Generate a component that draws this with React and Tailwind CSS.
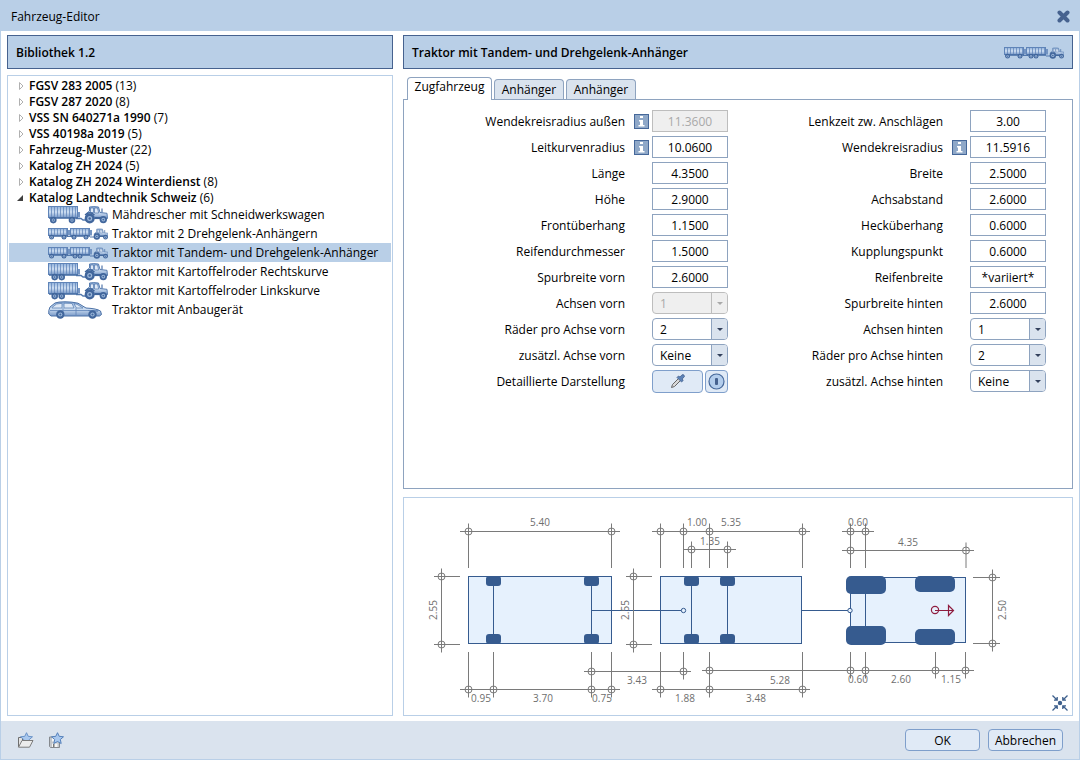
import { useId, useState } from 'react';

const groups = [
  { name: 'FGSV 283 2005', count: 13 },
  { name: 'FGSV 287 2020', count: 8 },
  { name: 'VSS SN 640271a 1990', count: 7 },
  { name: 'VSS 40198a 2019', count: 5 },
  { name: 'Fahrzeug-Muster', count: 22 },
  { name: 'Katalog ZH 2024', count: 5 },
  { name: 'Katalog ZH 2024 Winterdienst', count: 8 },
  { name: 'Katalog Landtechnik Schweiz', count: 6, open: true },
];

const vehicles = [
  { name: 'Mähdrescher mit Schneidwerkswagen', icon: 'trailer' },
  { name: 'Traktor mit 2 Drehgelenk-Anhängern', icon: 'double' },
  { name: 'Traktor mit Tandem- und Drehgelenk-Anhänger', icon: 'doubleTandem' },
  { name: 'Traktor mit Kartoffelroder Rechtskurve', icon: 'tandem' },
  { name: 'Traktor mit Kartoffelroder Linkskurve', icon: 'tandem' },
  { name: 'Traktor mit Anbaugerät', icon: 'car' },
];

const leftFields = [
  { label: 'Wendekreisradius außen', value: '11.3600', info: true, disabled: true },
  { label: 'Leitkurvenradius', value: '10.0600', info: true },
  { label: 'Länge', value: '4.3500' },
  { label: 'Höhe', value: '2.9000' },
  { label: 'Frontüberhang', value: '1.1500' },
  { label: 'Reifendurchmesser', value: '1.5000' },
  { label: 'Spurbreite vorn', value: '2.6000' },
  { label: 'Achsen vorn', options: ['1', '2'], disabled: true },
  { label: 'Räder pro Achse vorn', options: ['2', '4'] },
  { label: 'zusätzl. Achse vorn', options: ['Keine', 'Eine'] },
];

const rightFields = [
  { label: 'Lenkzeit zw. Anschlägen', value: '3.00' },
  { label: 'Wendekreisradius', value: '11.5916', info: true },
  { label: 'Breite', value: '2.5000' },
  { label: 'Achsabstand', value: '2.6000' },
  { label: 'Hecküberhang', value: '0.6000' },
  { label: 'Kupplungspunkt', value: '0.6000' },
  { label: 'Reifenbreite', value: '*variiert*' },
  { label: 'Spurbreite hinten', value: '2.6000' },
  { label: 'Achsen hinten', options: ['1', '2'] },
  { label: 'Räder pro Achse hinten', options: ['2', '4'] },
  { label: 'zusätzl. Achse hinten', options: ['Keine', 'Eine'] },
];

/* ---------- vehicle icons ---------- */

function Wheel({ x, y, r }) {
  return (
    <g>
      <circle cx={x} cy={y} r={r} fill="#41669c" />
      <circle cx={x} cy={y} r={r * 0.5} fill="#9db8da" />
      <circle cx={x} cy={y} r={r * 0.25} fill="#41669c" />
    </g>
  );
}

function Tractor({ fill }) {
  return (
    <g>
      <path d="M3 6.500 5 5V1q4-.8 9 0l1.500 5.500 7 .8.500 5.200H4l-2-3z" fill={fill} stroke="#4d74aa" strokeWidth="0.9" />
      <path d="M6 2h3v4.500H6zM10 2h3l1.200 5H10z" fill="#dfe9f6" stroke="#4d74aa" strokeWidth="0.7" />
      <path d="M17.500 6.500V2.500" stroke="#4d74aa" strokeWidth="1.200" />
      <path d="M10 12h8" stroke="#3f659b" strokeWidth="2.200" />
      <path d="M.5 9Q5 4.500 10 9" stroke="#3f659b" strokeWidth="1.200" />
      <Wheel x={5.2} y={12.4} r={5} />
      <Wheel x={18.8} y={13.6} r={3.7} />
    </g>
  );
}

function Wagon({ fill, width, height, wheels, r }) {
  const ribs = [];
  for (let x = 3.5; x < width - 1; x += 3) ribs.push(x);
  return (
    <g>
      <path d={`M${width - 0.5} ${height - 5}h2.500v5.500h-2.500z`} fill="#7394c3" />
      <rect x="0.5" y="0.5" width={width - 1} height={height} fill={fill} stroke="#5f84b8" />
      {ribs.map((x) => (
        <path key={x} d={`M${x} 1v${height - 1}`} stroke="#6488bb" strokeWidth="0.8" />
      ))}
      <path d={`M1 ${height + 1}h${width - 1}`} stroke="#4a70a6" strokeWidth="1.600" />
      {wheels.map((x) => (
        <Wheel key={x} x={x} y={height + r - 0.2} r={r} />
      ))}
    </g>
  );
}

function VehicleIcon({ type }) {
  const id = useId();
  const fill = `url(#${id})`;
  const double = type === 'double' || type === 'doubleTandem';

  return (
    <svg className="h-[18px] w-[60px] shrink-0" viewBox="0 0 60 18" fill="none" aria-hidden="true">
      <defs>
        <linearGradient id={id} x1="0" y1="0" x2="0" y2="1">
          <stop offset="0" stopColor="#8fb0da" />
          <stop offset="0.5" stopColor="#cfdff2" />
          <stop offset="1" stopColor="#7899c8" />
        </linearGradient>
      </defs>
      {type === 'car' && (
        <g>
          <path
            d="M.8 9.500 2 6 7 2q3-1.200 10-1.200T30 2.200L38 7q11 .6 14.500 3l1 3.500-2 1.500H3L.8 13z"
            fill={fill}
            stroke="#4a70a6"
          />
          <path d="M4 6.500 8.500 3 14 2.300V7H4zM16 2.200l8 .2L26 7H16zM26 2.700l3 .6L35 7h-6.500z" fill="#dfe9f6" stroke="#5278ad" strokeWidth="0.7" />
          <path d="M2 9.500h50M15 7v7M28 7v7M40 9.500l10 1" stroke="#5f84b8" strokeWidth="0.8" />
          <Wheel x={12.3} y={13.5} r={4.2} />
          <Wheel x={44.5} y={13.5} r={4.2} />
        </g>
      )}
      {(type === 'trailer' || type === 'tandem') && (
        <g>
          <path d="M28 12.500h5l2 1.500h5" stroke="#5278ad" strokeWidth="1.400" />
          <Wagon fill={fill} width={30} height={11} wheels={type === 'tandem' ? [6.7, 13.7] : [5.3, 24]} r={3.3} />
          <g transform="translate(36.500 0)">
            <Tractor fill={fill} />
          </g>
        </g>
      )}
      {double && (
        <g transform="translate(0 3)">
          <path d="M19 8.500h5M42 9h6" stroke="#5278ad" strokeWidth="1.200" />
          <Wagon fill={fill} width={20} height={7} wheels={[3.6, 16]} r={2.4} />
          <g transform="translate(22 0)">
            <Wagon fill={fill} width={20} height={7} wheels={type === 'doubleTandem' ? [5, 10] : [4, 16]} r={2.4} />
          </g>
          <g transform="translate(45.500 .5) scale(.64)">
            <Tractor fill={fill} />
          </g>
        </g>
      )}
    </svg>
  );
}

/* ---------- form controls ---------- */

function InfoButton({ label }) {
  return (
    <button
      type="button"
      aria-label={`Info ${label}`}
      className="flex size-[15px] items-center justify-center border border-[#46689a] bg-[#8fa8c8]"
    >
      <svg className="h-[11px] w-[7px]" viewBox="0 0 7 11" fill="#fff">
        <path d="M2 0h3v2H2zM1 4h4v5h1.500v1.500H.5V9H2V5.500H1z" />
      </svg>
    </button>
  );
}

function Row({ id, label, info, children }) {
  return (
    <div className="flex h-[22px] items-center">
      <label htmlFor={id} className="flex-1 pt-0.5 text-right">{label}</label>
      <div className="ml-[9px] mr-[3px] w-[15px]">{info && <InfoButton label={label} />}</div>
      <div className="w-[76px]">{children}</div>
    </div>
  );
}

function Field({ field }) {
  const id = useId();
  return (
    <Row id={id} label={field.label} info={field.info}>
      {field.options ? (
        <div className="relative">
          <select
            id={id}
            disabled={field.disabled}
            className="block h-[22px] w-full appearance-none rounded border border-[#8ea3bf] bg-white pl-[7px] pr-5 pt-px disabled:border-[#bdbdbd] disabled:bg-[#efefef] disabled:text-[#a9a9a9] disabled:opacity-100"
          >
            {field.options.map((o) => (
              <option key={o}>{o}</option>
            ))}
          </select>
          <span
            className={`pointer-events-none absolute inset-y-px right-px flex w-4 items-center justify-center rounded-r-[3px] border-l ${
              field.disabled ? 'border-[#bdbdbd] bg-[#efefef] text-[#a9a9a9]' : 'border-[#8ea3bf] bg-[#dae3ee] text-[#33415c]'
            }`}
          >
            <svg className="h-[3px] w-[6px]" viewBox="0 0 6 3" fill="currentColor">
              <path d="M0 0h6L3 3z" />
            </svg>
          </span>
        </div>
      ) : (
        <input
          id={id}
          type="text"
          defaultValue={field.value}
          disabled={field.disabled}
          className="block h-[22px] w-full border border-[#8ea3bf] bg-white text-center disabled:border-[#bdbdbd] disabled:bg-[#efefef] disabled:text-[#a9a9a9]"
        />
      )}
    </Row>
  );
}

/* ---------- dimension drawing ---------- */

// horizontal dimension chains: y, from, to, ticks
const chains = [
  [33.5, 56, 216, [64.5, 207.5]],
  [33.5, 248, 406, [256.5, 279.5, 305.5, 398.5]],
  [51.5, 279, 332, [287.5, 323.5]],
  [33.5, 438, 470, [446.5, 461.5]],
  [52.5, 438, 570, [446.5, 562]],
  [191.5, 56, 216, [64.5, 89.5, 187.5, 207.5]],
  [173.5, 180, 287, [187.5, 279.5]],
  [191.5, 248, 406, [256.5, 305.5, 398.5]],
  [172.5, 298, 570, [305.5, 446.5, 461.5, 531.5, 561.5]],
];

// vertical dimensions: x, top, bottom, from, to
const heights = [
  [37.5, 78.5, 146.5, 30, 56],
  [229.5, 78.5, 146.5, 222, 248],
  [588.5, 79.5, 145.5, 569, 596],
];

const labels = [
  ['5.40', 136, 28], ['1.00', 293, 28], ['5.35', 327, 28], ['1.35', 306, 47], ['0.60', 454, 28], ['4.35', 504, 48],
  ['0.95', 77, 204], ['3.70', 139, 204], ['0.75', 198, 204], ['3.43', 233, 186], ['1.88', 281, 204], ['3.48', 352, 204],
  ['5.28', 376, 186], ['0.60', 454, 185], ['2.60', 497, 185], ['1.15', 547, 185],
];

const wheels = [
  [82, 78, 15, 10], [82, 136, 15, 10], [180, 78, 15, 10], [180, 136, 15, 10],
  [280, 78, 15, 10], [280, 136, 15, 10], [316, 78, 15, 10], [316, 136, 15, 10],
];

const tractorWheels = [
  [442, 78, 40, 18], [442, 128, 40, 19], [511, 78, 40, 16], [511, 131, 40, 16],
];

function Drawing() {
  return (
    <svg className="block w-full" viewBox="0 0 668 217" fill="none" role="img" aria-label="Fahrzeugabmessungen">
      <g fill="#e6f1fd" stroke="#365b8f">
        <rect x="64.5" y="78.5" width="143" height="67" />
        <rect x="256.5" y="78.5" width="141" height="67" />
        <rect x="446.5" y="79.5" width="115" height="65" />
      </g>
      <g stroke="#365b8f">
        <path d="M89.500 79v66M187.500 79v66M287.500 79v66M323.500 79v66M461.500 80v64" />
        <path d="M187.500 112.500h92M398 112.500h47" />
      </g>
      <g fill="#365b8f">
        {wheels.map(([x, y, w, h]) => (
          <rect key={`${x}-${y}`} x={x} y={y} width={w} height={h} rx="3" />
        ))}
        {tractorWheels.map(([x, y, w, h]) => (
          <rect key={`${x}-${y}`} x={x} y={y} width={w} height={h} rx="5" />
        ))}
      </g>
      <g fill="#e6f1fd" stroke="#365b8f">
        <circle cx="279.5" cy="112.5" r="2.2" />
        <circle cx="446" cy="112.5" r="2.2" />
      </g>
      <g stroke="#8f1d3f" strokeWidth="1.200">
        <circle cx="531" cy="112" r="3.6" />
        <path d="M531 112.500h18M544.500 107.500v10l5-5z" />
      </g>

      <g stroke="#7a7a7a">
        {chains.map(([y, from, to, ticks]) => (
          <g key={`${y}-${from}-${to}`}>
            <path d={`M${from} ${y}H${to}`} />
            {ticks.map((x) => (
              <g key={x}>
                <path d={y < 100 ? `M${x} ${y - 8}V70` : `M${x} 154V${y + 8}`} />
                <circle cx={x} cy={y} r="3.5" />
              </g>
            ))}
          </g>
        ))}
        {heights.map(([x, top, bottom, from, to]) => (
          <g key={x}>
            <path d={`M${x} ${top - 8}V${bottom + 8}M${from} ${top}H${to}M${from} ${bottom}H${to}`} />
            <circle cx={x} cy={top} r="3.5" />
            <circle cx={x} cy={bottom} r="3.5" />
          </g>
        ))}
      </g>

      <g fill="#6e6e6e" fontSize="10" textAnchor="middle">
        {labels.map(([text, x, y]) => (
          <text key={`${text}-${x}-${y}`} x={x} y={y}>{text}</text>
        ))}
        <text transform="translate(33 112) rotate(-90)">2.55</text>
        <text transform="translate(225 112) rotate(-90)">2.55</text>
        <text transform="translate(602 112) rotate(-90)">2.50</text>
      </g>
    </svg>
  );
}

/* ---------- small icons ---------- */

const star = 'M9.500.7l1.700 3.600 4.300.5-3.200 2.700.9 4-3.700-2-3.700 2 .9-4-3.200-2.700 4.300-.5z';

function OpenFavouriteIcon() {
  return (
    <svg className="h-4 w-[17px]" viewBox="0 0 17 16" fill="none">
      <path d="M1.500 15V5.500h4V8" fill="#e4e4e4" stroke="#6f6f6f" />
      <path d={star} fill="#a9c8ee" stroke="#6a93c8" />
      <path d="M1.500 15.200 5 8.500h11l-3.500 6.700z" fill="#ececec" stroke="#7b7b7b" />
    </svg>
  );
}

function SaveFavouriteIcon() {
  return (
    <svg className="h-4 w-[17px]" viewBox="0 0 17 16" fill="none">
      <path d="M1.500 5h10v10.500h-9l-1-1z" fill="#c3c6ca" stroke="#85898e" />
      <path d="M4 5.500h5v4H4zM4 11.500h5.500v3.500H4z" fill="#f6f6f6" />
      <path d="M5 12h1.500v3H5z" fill="#777" />
      <path d={star} fill="#a9c8ee" stroke="#5581bb" />
    </svg>
  );
}

export default function App() {
  const [selected, setSelected] = useState(2);
  const [tab, setTab] = useState(0);

  return (
    <div className="flex min-h-screen flex-col border border-t-0 border-[#b9cfe7] bg-white font-['Segoe_UI','Open_Sans',sans-serif] text-xs text-black">
      <header className="flex h-[31px] items-center justify-between bg-[#b9cfe7] pl-2.5 pr-2 pt-px">
        <h1 className="pt-px">Fahrzeug-Editor</h1>
        <button type="button" aria-label="Schließen" className="flex size-4 items-center justify-center">
          <svg className="size-[13px]" viewBox="0 0 13 13" stroke="#46628f" strokeWidth="4" strokeLinecap="round">
            <path d="M2.500 2.500l8 8M10.500 2.500l-8 8" />
          </svg>
        </button>
      </header>

      <main className="grid flex-1 grid-cols-[386fr_670fr] gap-2.5 px-1.5 pb-[5px] pt-1">
        {/* Library */}
        <section className="flex min-w-0 flex-col gap-1.5">
          <h2 className="flex h-[34px] items-center border border-[#46628f] bg-[#b9cfe7] px-2 pt-0.5 font-semibold">Bibliothek 1.2</h2>
          <div className="flex-1 border border-[#b9cfe7] px-px pt-px">
            {groups.map((g) => (
              <button key={g.name} type="button" aria-expanded={!!g.open} className="flex h-4 w-full items-center whitespace-pre pl-2 pt-0.5 text-left">
                <svg className="mr-1 size-2" viewBox="0 0 8 8">
                  {g.open ? <path d="M6 1v6H0z" fill="#404040" /> : <path d="M2.500.5v7l3.500-3.500z" fill="#fff" stroke="#b0b0b0" />}
                </svg>
                <span className="font-semibold">{g.name}</span> ({g.count})
              </button>
            ))}
            {vehicles.map((v, i) => (
              <button
                key={v.name}
                type="button"
                onClick={() => setSelected(i)}
                className={`flex h-[19px] w-full items-center gap-1 whitespace-nowrap pl-[39px] text-left ${i === selected ? 'bg-[#b9cfe7]' : ''}`}
              >
                <VehicleIcon type={v.icon} />
                {v.name}
              </button>
            ))}
          </div>
        </section>

        {/* Editor */}
        <section className="flex min-w-0 flex-col">
          <h2 className="flex h-[34px] items-center justify-between border border-[#46628f] bg-[#b9cfe7] px-2 pt-0.5 font-semibold">
            Traktor mit Tandem- und Drehgelenk-Anhänger
            <VehicleIcon type="doubleTandem" />
          </h2>

          <div role="tablist" className="flex items-end gap-0.5 px-1 pt-2">
            {['Zugfahrzeug', 'Anhänger', 'Anhänger'].map((name, i) => (
              <button
                key={i}
                type="button"
                role="tab"
                aria-selected={tab === i}
                onClick={() => setTab(i)}
                className={`rounded-t-sm border border-b-0 border-[#8ea3bf] ${
                  tab === i ? 'z-10 -mb-px h-[23px] w-[85px] bg-white pb-1' : 'h-5 w-[70px] bg-[#dae3ee]'
                }`}
              >
                {name}
              </button>
            ))}
          </div>

          <div className="grid flex-1 grid-cols-2 content-start border border-[#8ea3bf] pb-2 pl-1.5 pr-[26px] pt-2.5">
            <div className="flex flex-col gap-1">
              {leftFields.map((f) => (
                <Field key={f.label} field={f} />
              ))}
              <Row id="detail" label="Detaillierte Darstellung">
                <div className="flex gap-0.5">
                  <button id="detail" type="button" aria-label="Farbe wählen" className="flex h-[23px] flex-1 items-center justify-center rounded border border-[#7f9fcb] bg-[#e0eaf6]">
                    <svg className="size-4" viewBox="0 0 16 16" fill="none">
                      <path d="M1.500 14.500l1-3 6.500-6.500 2 2-6.500 6.500z" fill="#d8d8d8" stroke="#666" />
                      <path d="M7 4.500 8.500 3l1.500 1L12 1.800q2.200-.8 2.500 1.700L12.200 6l1 1.500L11.500 9z" fill="#5d83b7" stroke="#46628f" strokeWidth="0.8" />
                    </svg>
                  </button>
                  <button type="button" aria-label="Darstellung umschalten" className="flex size-[23px] items-center justify-center rounded border border-[#7f9fcb] bg-[#e0eaf6]">
                    <svg className="size-[17px]" viewBox="0 0 17 17" fill="none">
                      <circle cx="8.5" cy="8.5" r="7.500" fill="#b3cdec" stroke="#46689a" strokeWidth="1.200" />
                      <rect x="7" y="5" width="3" height="7" rx="1" fill="#46628f" />
                    </svg>
                  </button>
                </div>
              </Row>
            </div>
            <div className="flex flex-col gap-1">
              {rightFields.map((f) => (
                <Field key={f.label} field={f} />
              ))}
            </div>
          </div>

          <div className="relative mt-2 border border-[#b9cfe7]">
            <Drawing />
            <button type="button" aria-label="Ansicht einpassen" className="absolute bottom-1 right-1">
              <svg className="size-4" viewBox="0 0 16 16" fill="none" stroke="#3d5f8c" strokeWidth="1.300">
                <circle cx="8" cy="8" r="2.2" fill="#3d5f8c" stroke="none" />
                <path d="M.5.5l4.500 4.500M2 5.200h3.200V2M15.500.5 11 5M10.800 2v3.200H14M.5 15.500 5 11M2 10.800h3.200V14M15.500 15.500 11 11M10.800 14v-3.200H14" />
              </svg>
            </button>
          </div>
        </section>
      </main>

      <footer className="flex h-[38px] items-center justify-between bg-[#dae3ee] px-4">
        <div className="flex gap-3.5">
          <button type="button" aria-label="Favorit öffnen"><OpenFavouriteIcon /></button>
          <button type="button" aria-label="Favorit speichern"><SaveFavouriteIcon /></button>
        </div>
        <div className="flex gap-2">
          <button type="button" className="h-[22px] w-[75px] rounded border border-[#7f9fcb] bg-[#e0eaf6] pt-px">OK</button>
          <button type="button" className="h-[22px] w-[75px] rounded border border-[#7f9fcb] bg-[#e0eaf6] pt-px">Abbrechen</button>
        </div>
      </footer>
    </div>
  );
}
